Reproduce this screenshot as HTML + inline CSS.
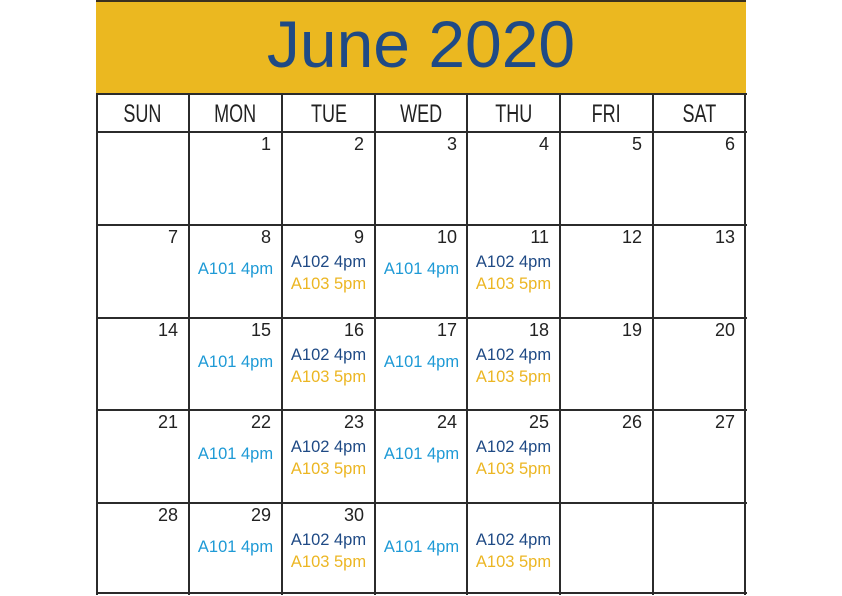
<!DOCTYPE html>
<html><head><meta charset="utf-8"><style>
body{margin:0;width:842px;height:595px;background:#fff;position:relative;overflow:hidden;font-family:"Liberation Sans",sans-serif}
.hdr{position:absolute;left:96px;top:0;width:650px;height:94px;background:#ebb820;border-top:2px solid #3a3020;box-sizing:border-box}
.title{position:absolute;left:96px;top:9px;width:650px;text-align:center;font-size:66px;color:#1f4a85;line-height:70px}
.v{position:absolute;width:2px;background:#2b2b2b;top:93px;height:502px}
.h{position:absolute;height:2px;background:#2b2b2b;left:96px;width:651px}
.dw{position:absolute;top:96px;height:36px;width:93px;text-align:center;font-size:25px;line-height:36px;color:#222}
.dw span{display:inline-block;transform:scaleX(.72)}
.c{position:absolute;width:93px;height:93px}
.n{position:absolute;right:11px;top:2px;font-size:18px;color:#222}
.e{position:absolute;left:0;width:93px;text-align:center;font-size:16.5px;line-height:18px}
.a1{top:35px;color:#1e9ad6}.a2{top:28px;color:#1f4a85}.a3{top:50px;color:#ecb623}
</style></head><body>
<div class="hdr"></div>
<div class="title">June 2020</div>
<div class="v" style="left:96px"></div><div class="v" style="left:188px"></div><div class="v" style="left:281px"></div><div class="v" style="left:374px"></div><div class="v" style="left:466px"></div><div class="v" style="left:559px"></div><div class="v" style="left:652px"></div><div class="v" style="left:744px"></div>
<div class="h" style="top:93px"></div><div class="h" style="top:131px"></div><div class="h" style="top:224px"></div><div class="h" style="top:317px"></div><div class="h" style="top:409px"></div><div class="h" style="top:502px"></div><div class="h" style="top:592px"></div>
<div class="dw" style="left:96px"><span>SUN</span></div><div class="dw" style="left:189px"><span>MON</span></div><div class="dw" style="left:282px"><span>TUE</span></div><div class="dw" style="left:375px"><span>WED</span></div><div class="dw" style="left:467px"><span>THU</span></div><div class="dw" style="left:560px"><span>FRI</span></div><div class="dw" style="left:653px"><span>SAT</span></div>

<div class="c" style="left:189px;top:132px"><div class="n">1</div></div>
<div class="c" style="left:282px;top:132px"><div class="n">2</div></div>
<div class="c" style="left:375px;top:132px"><div class="n">3</div></div>
<div class="c" style="left:467px;top:132px"><div class="n">4</div></div>
<div class="c" style="left:560px;top:132px"><div class="n">5</div></div>
<div class="c" style="left:653px;top:132px"><div class="n">6</div></div>

<div class="c" style="left:96px;top:225px"><div class="n">7</div></div>
<div class="c" style="left:189px;top:225px"><div class="n">8</div><div class="e a1">A101 4pm</div></div>
<div class="c" style="left:282px;top:225px"><div class="n">9</div><div class="e a2">A102 4pm</div><div class="e a3">A103 5pm</div></div>
<div class="c" style="left:375px;top:225px"><div class="n">10</div><div class="e a1">A101 4pm</div></div>
<div class="c" style="left:467px;top:225px"><div class="n">11</div><div class="e a2">A102 4pm</div><div class="e a3">A103 5pm</div></div>
<div class="c" style="left:560px;top:225px"><div class="n">12</div></div>
<div class="c" style="left:653px;top:225px"><div class="n">13</div></div>

<div class="c" style="left:96px;top:318px"><div class="n">14</div></div>
<div class="c" style="left:189px;top:318px"><div class="n">15</div><div class="e a1">A101 4pm</div></div>
<div class="c" style="left:282px;top:318px"><div class="n">16</div><div class="e a2">A102 4pm</div><div class="e a3">A103 5pm</div></div>
<div class="c" style="left:375px;top:318px"><div class="n">17</div><div class="e a1">A101 4pm</div></div>
<div class="c" style="left:467px;top:318px"><div class="n">18</div><div class="e a2">A102 4pm</div><div class="e a3">A103 5pm</div></div>
<div class="c" style="left:560px;top:318px"><div class="n">19</div></div>
<div class="c" style="left:653px;top:318px"><div class="n">20</div></div>

<div class="c" style="left:96px;top:410px"><div class="n">21</div></div>
<div class="c" style="left:189px;top:410px"><div class="n">22</div><div class="e a1">A101 4pm</div></div>
<div class="c" style="left:282px;top:410px"><div class="n">23</div><div class="e a2">A102 4pm</div><div class="e a3">A103 5pm</div></div>
<div class="c" style="left:375px;top:410px"><div class="n">24</div><div class="e a1">A101 4pm</div></div>
<div class="c" style="left:467px;top:410px"><div class="n">25</div><div class="e a2">A102 4pm</div><div class="e a3">A103 5pm</div></div>
<div class="c" style="left:560px;top:410px"><div class="n">26</div></div>
<div class="c" style="left:653px;top:410px"><div class="n">27</div></div>

<div class="c" style="left:96px;top:503px"><div class="n">28</div></div>
<div class="c" style="left:189px;top:503px"><div class="n">29</div><div class="e a1">A101 4pm</div></div>
<div class="c" style="left:282px;top:503px"><div class="n">30</div><div class="e a2">A102 4pm</div><div class="e a3">A103 5pm</div></div>
<div class="c" style="left:375px;top:503px"><div class="e a1">A101 4pm</div></div>
<div class="c" style="left:467px;top:503px"><div class="e a2">A102 4pm</div><div class="e a3">A103 5pm</div></div>
</body></html>
